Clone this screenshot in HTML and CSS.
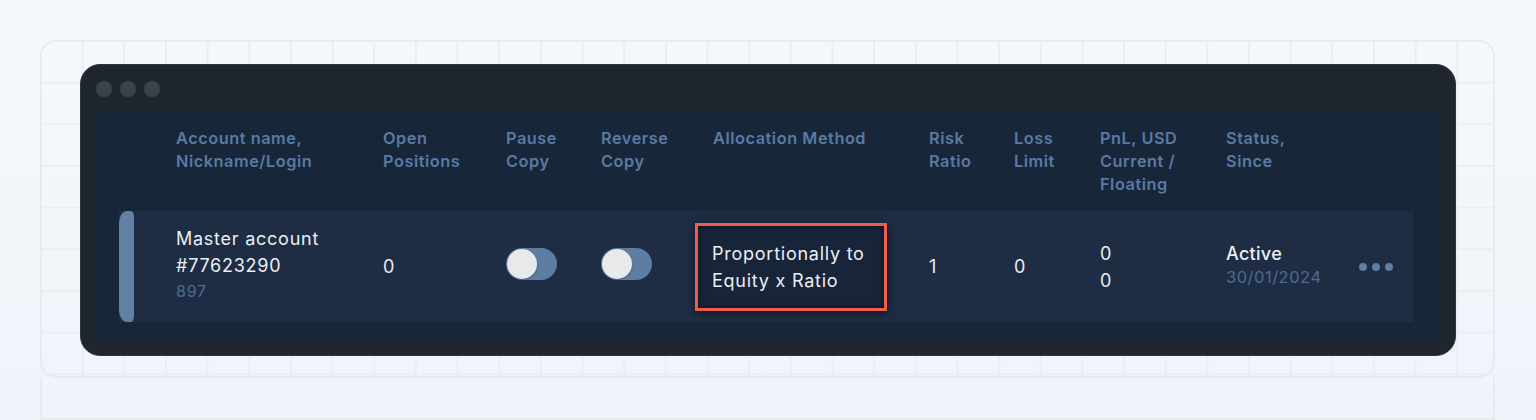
FILE: index.html
```html
<!DOCTYPE html>
<html lang="en">
<head>
<meta charset="utf-8">
<title>Copy accounts</title>
<link rel="stylesheet" href="styles.css">
</head>
<body>
<div class="stage">
  <div class="grid-card">
    <div class="window">
      <div class="titlebar">
        <span class="dot"></span><span class="dot"></span><span class="dot"></span>
      </div>
      <div class="panel">
        <div class="head cols">
          <div>Account name,<br>Nickname/Login</div>
          <div>Open<br>Positions</div>
          <div>Pause<br>Copy</div>
          <div>Reverse<br>Copy</div>
          <div>Allocation Method</div>
          <div>Risk<br>Ratio</div>
          <div>Loss<br>Limit</div>
          <div>PnL, USD<br>Current /<br>Floating</div>
          <div>Status,<br>Since</div>
          <div></div>
        </div>
        <div class="row">
          <div class="accent"></div>
          <div class="cols body">
            <div class="acc">
              <div class="main">Master account</div>
              <div class="main">#77623290</div>
              <div class="sub">897</div>
            </div>
            <div class="val">0</div>
            <div><span class="toggle"><span class="knob"></span></span></div>
            <div><span class="toggle"><span class="knob"></span></span></div>
            <div><div class="highlight">Proportionally to<br>Equity x Ratio</div></div>
            <div class="val">1</div>
            <div class="val">0</div>
            <div class="pnl"><div>0</div><div>0</div></div>
            <div class="status">
              <div class="active">Active</div>
              <div class="date">30/01/2024</div>
            </div>
            <div class="more"><span></span><span></span><span></span></div>
          </div>
        </div>
      </div>
    </div>
  </div>
  <div class="under"></div>
</div>
</body>
</html>
```

FILE: styles.css
```css
html, body {
  margin: 0;
  padding: 0;
}
body {
  width: 1536px;
  height: 420px;
  overflow: hidden;
  background: linear-gradient(180deg, #f5f9fc 0%, #eef4fa 100%);
  font-family: Inter, Roboto, "Liberation Sans", sans-serif;
}
.stage {
  padding: 40px 41px 0 40px;
}
.grid-card {
  height: 338px;
  box-sizing: border-box;
  border: 2px solid #e6ebf0;
  border-radius: 16px;
  padding: 22px 37px 0 38px;
  background-image:
    linear-gradient(to right, #e9eef3 2px, transparent 2px),
    linear-gradient(to bottom, #e9eef3 2px, transparent 2px);
  background-size: 41.67px 41.67px;
  background-position: -2px -2px;
}
.under {
  height: 40px;
  border: 2px solid #e6ebf0;
  border-top: none;
}
.window {
  height: 292px;
  box-sizing: border-box;
  background: #20262e;
  border-radius: 20px;
  border: 1px solid #2f3741;
  padding: 0 15px 15px 15px;
  display: flex;
  flex-direction: column;
}
.titlebar {
  height: 47px;
  display: flex;
  align-items: center;
  gap: 8px;
}
.dot {
  width: 16px;
  height: 16px;
  border-radius: 50%;
  background: #3a434c;
}
.panel {
  flex: 1;
  background: #18263a;
}
.cols {
  display: grid;
  grid-template-columns: 207px 123px 95px 112px 216px 85px 86px 126px 133px 1fr;
}
.head {
  height: 99px;
  box-sizing: border-box;
  padding: 15px 0 0 80px;
  color: #5a7aa4;
  font-size: 16.3px;
  font-weight: 600;
  line-height: 23px;
  letter-spacing: 0.55px;
}
.row {
  margin: 0 27px 0 23px;
  height: 111px;
  background: #1e2d44;
  display: flex;
}
.accent {
  width: 15px;
  flex: none;
  background: #6380a5;
  border-radius: 8px 3px 3px 8px / 12px 6px 6px 12px;
}
.body {
  flex: 1;
  padding-left: 42px;
  align-items: center;
  color: #eceef1;
  font-size: 18px;
  letter-spacing: 0.75px;
}
.acc {
  margin-top: -5px;
}
.main {
  line-height: 26.7px;
}
.sub {
  color: #4d6b91;
  font-size: 16px;
  line-height: 22px;
}
.val {
  line-height: 24px;
}
.toggle {
  display: inline-flex;
  align-items: center;
  width: 51px;
  height: 32px;
  margin-top: -6px;
  border-radius: 16px;
  background: #5f7da1;
  box-sizing: border-box;
  padding: 1px;
  vertical-align: middle;
}
.knob {
  width: 30px;
  height: 30px;
  border-radius: 50%;
  background: #e8e9eb;
  box-shadow: 0 1px 2px rgba(0,0,0,0.25);
}
.highlight {
  margin-left: -18px;
  width: 192px;
  box-sizing: border-box;
  border: 3px solid #f25c4d;
  padding: 14px 14px;
  background: #17243a;
  line-height: 27px;
  white-space: nowrap;
  box-shadow: 0 2px 8px rgba(0,0,0,0.55), inset 0 0 6px rgba(0,0,0,0.5);
}
.pnl {
  line-height: 27px;
}
.status {
  margin-top: -4px;
}
.active {
  font-size: 18px;
  font-weight: 500;
  line-height: 24px;
  letter-spacing: 0.3px;
}
.date {
  color: #4d6b91;
  font-size: 16.5px;
  line-height: 22px;
  letter-spacing: 0.5px;
}
.more {
  display: flex;
  gap: 5px;
  align-items: center;
}
.more span {
  width: 8px;
  height: 8px;
  border-radius: 50%;
  background: #5f7da1;
}
```
